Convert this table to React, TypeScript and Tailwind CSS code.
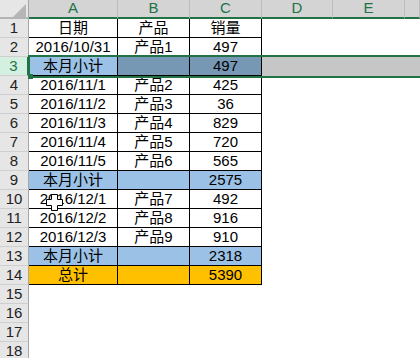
const rows: [string, string, string, string][] = [
  ["日期", "产品", "销量", ""],
  ["2016/10/31", "产品1", "497", ""],
  ["本月小计", "", "497", "sel"],
  ["2016/11/1", "产品2", "425", ""],
  ["2016/11/2", "产品3", "36", ""],
  ["2016/11/3", "产品4", "829", ""],
  ["2016/11/4", "产品5", "720", ""],
  ["2016/11/5", "产品6", "565", ""],
  ["本月小计", "", "2575", "blue"],
  ["2016/12/1", "产品7", "492", ""],
  ["2016/12/2", "产品8", "916", ""],
  ["2016/12/3", "产品9", "910", ""],
  ["本月小计", "", "2318", "blue"],
  ["总计", "", "5390", "gold"],
];

const colLetters = ["A", "B", "C", "D", "E", ""];

function RowHeader({ n, active }: { n: number; active?: boolean }) {
  return (
    <div
      className={`flex h-[19px] items-center justify-center border-b border-[#cfcfcf] text-[15px] ${
        active ? "border-r-2 border-r-[#217346] bg-[#d3f0e0] text-[#217346]" : "border-r border-r-[#a6a6a6] bg-[#e6e6e6] text-[#222]"
      }`}
    >
      {n}
    </div>
  );
}

export default function App() {
  return (
    <div
      className="relative h-[358px] w-[420px] overflow-hidden bg-white"
      style={{ fontFamily: '"Liberation Sans", "Noto Sans CJK SC", sans-serif' }}
    >
      <div className="grid grid-cols-[29px_89px_72px_72px_71px_72px_1fr]">
        {/* corner */}
        <div className="relative h-[19px] border-r border-b-2 border-r-[#a6a6a6] border-b-[#b4b4b4] bg-[#e6e6e6]">
          <svg className="absolute top-[4px] left-[13px]" width="13" height="13" viewBox="0 0 13 13">
            <polygon points="13,0 13,13 0,13" fill="#b6b6b6" />
          </svg>
        </div>
        {colLetters.map((c, i) => (
          <div
            key={i}
            className="flex h-[19px] items-center justify-center border-r border-b-2 border-r-[#bcbcbc] border-b-[#217346] bg-[#d4d4d4] text-[15px] text-[#217346]"
          >
            {c}
          </div>
        ))}

        {rows.map((r, i) => {
          const n = i + 1;
          const kind = r[3];
          const bg =
            kind === "blue" ? "bg-[#9bc2e6]" : kind === "gold" ? "bg-[#ffc000]" : "bg-white";
          const bgB = kind === "sel" ? "bg-[#7698b5]" : bg;
          const bgA = kind === "sel" ? "bg-[#9bc2e6]" : bg;
          const rest = kind === "sel" ? "bg-[#c6c6c6]" : "bg-white";
          const cell = "flex h-[19px] items-center justify-center border-r border-b border-black text-[15px] text-black";
          return [
            <RowHeader key={`h${n}`} n={n} active={kind === "sel"} />,
            <div key={`a${n}`} className={`${cell} ${bgA}`}>{r[0]}</div>,
            <div key={`b${n}`} className={`${cell} ${bgB}`}>{r[1]}</div>,
            <div key={`c${n}`} className={`${cell} ${bgB}`}>{r[2]}</div>,
            <div key={`d${n}`} className={`h-[19px] ${rest}`} />,
            <div key={`e${n}`} className={`h-[19px] ${rest}`} />,
            <div key={`f${n}`} className={`h-[19px] ${rest}`} />,
          ];
        })}

        {[15, 16, 17, 18].map((n) => [
          <RowHeader key={`h${n}`} n={n} />,
          <div key={`r${n}`} className="col-span-6 h-[19px] bg-white" />,
        ])}
      </div>

      {/* selected row outline */}
      <div className="absolute top-[55px] right-[-4px] left-[28px] h-[23px] border-2 border-[#217346]" />
      <div className="absolute top-[74px] left-[28px] h-[5px] w-[5px] bg-[#217346]" />

      {/* cell cursor */}
      <svg className="absolute top-[194px] left-[46px]" width="17" height="17" viewBox="0 0 17 17">
        <path
          d="M5.5 0.5h6v5h5v6h-5v5h-6v-5h-5v-6h5z"
          fill="#fff"
          stroke="#000"
          strokeWidth="1"
        />
      </svg>
    </div>
  );
}
